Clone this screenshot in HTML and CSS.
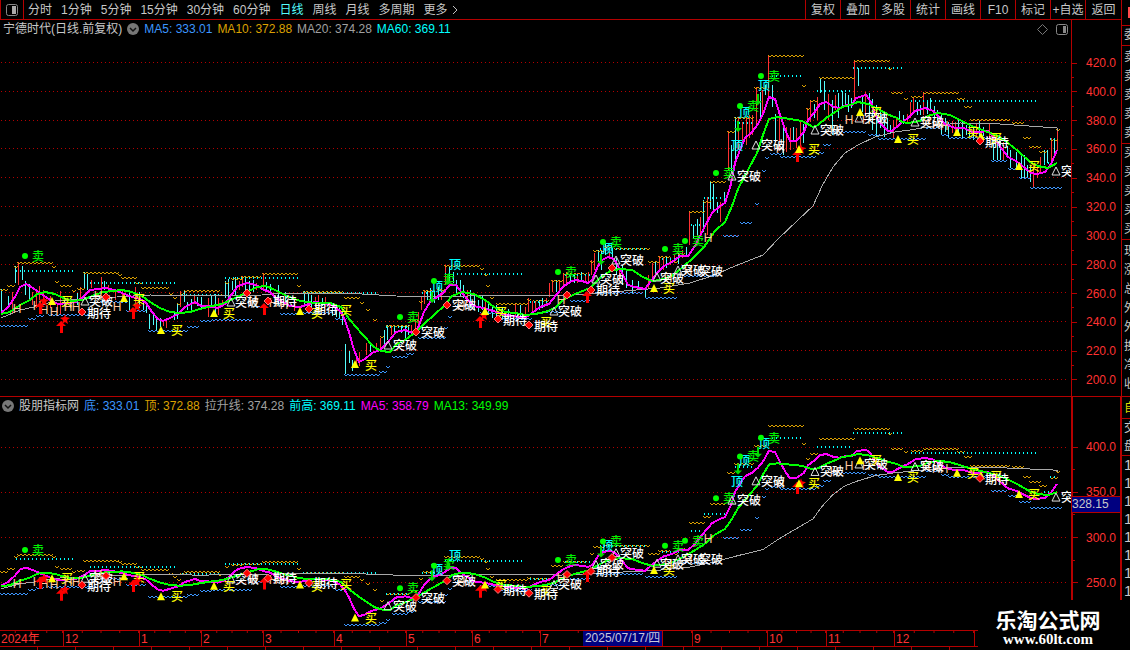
FILE: index.html
```html
<!DOCTYPE html>
<html lang="zh-CN">
  <head>
    <meta charset="UTF-8" />
    <meta name="viewport" content="width=device-width, initial-scale=1.0" />
    <title>宁德时代</title>
    <link rel="stylesheet" href="styles.css">
  </head>
  <body>
    <div class="app">
      <main class="main">
        <nav class="toolbar">
          <button class="layout-btn" aria-label="布局">
            <svg width="12" height="12" viewBox="0 0 12 12">
              <rect x="0.5" y="0.5" width="11" height="11" rx="2" fill="none" stroke="#888" />
              <rect x="6" y="2" width="4" height="8" fill="#aaa" />
            </svg>
          </button>
          <div class="periods">
            <button>分时</button>
            <button>1分钟</button>
            <button>5分钟</button>
            <button>15分钟</button>
            <button>30分钟</button>
            <button>60分钟</button>
            <button class="active">日线</button>
            <button>周线</button>
            <button>月线</button>
            <button>多周期</button>
            <button class="more">更多
              <svg width="6" height="10" viewBox="0 0 6 10">
                <path d="M1 1l4 4-4 4" fill="none" stroke="#c0c0c0" />
              </svg>
            </button>
          </div>
          <div class="tools">
            <button>复权</button>
            <button>叠加</button>
            <button>多股</button>
            <button>统计</button>
            <button>画线</button>
            <button>F10</button>
            <button>标记</button>
            <button>+自选</button>
            <button>返回</button>
          </div>
        </nav>

        <section class="panel">
          <div class="plot">
            <div class="legend">
              <span class="name">宁德时代(日线.前复权)</span>
              <button class="fold" aria-label="展开">
                <svg width="12" height="12" viewBox="0 0 12 12">
                  <circle cx="6" cy="6" r="6" fill="#777" />
                  <path d="M3 5l3 3 3-3" fill="none" stroke="#111" stroke-width="1.5" />
                </svg>
              </button>
              <span class="blue">MA5: 333.01</span>
              <span class="gold">MA10: 372.88</span>
              <span class="gray">MA20: 374.28</span>
              <span class="cyan">MA60: 369.11</span>
              <span class="corner">
                <svg width="11" height="11" viewBox="0 0 11 11">
                  <path d="M5.5 0.5l5 5-5 5-5-5z" fill="none" stroke="#777" />
                </svg>
                <svg width="12" height="11" viewBox="0 0 12 11">
                  <rect x="0.5" y="0.5" width="11" height="10" rx="2" fill="none" stroke="#888" />
                  <rect x="7" y="2" width="3" height="7" fill="#888" />
                </svg>
              </span>
            </div>
            <svg class="chart" id="priceChart" viewBox="0 38 1071 358"></svg>
          </div>
          <ul class="axis">
            <li>420.0</li><li class="minor"></li>
            <li>400.0</li><li class="minor"></li>
            <li>380.0</li><li class="minor"></li>
            <li>360.0</li><li class="minor"></li>
            <li>340.0</li><li class="minor"></li>
            <li>320.0</li><li class="minor"></li>
            <li>300.0</li><li class="minor"></li>
            <li>280.0</li><li class="minor"></li>
            <li>260.0</li><li class="minor"></li>
            <li>240.0</li><li class="minor"></li>
            <li>220.0</li><li class="minor"></li>
            <li>200.0</li>
          </ul>
        </section>

        <section class="panel panel-sub">
          <div class="plot">
            <div class="legend">
              <button class="fold" aria-label="展开">
                <svg width="12" height="12" viewBox="0 0 12 12">
                  <circle cx="6" cy="6" r="6" fill="#777" />
                  <path d="M3 5l3 3 3-3" fill="none" stroke="#111" stroke-width="1.5" />
                </svg>
              </button>
              <span class="name">股朋指标网</span>
              <span class="blue">底: 333.01</span>
              <span class="gold">顶: 372.88</span>
              <span class="gray">拉升线: 374.28</span>
              <span class="cyan">前高: 369.11</span>
              <span class="magenta">MA5: 358.79</span>
              <span class="green">MA13: 349.99</span>
            </div>
            <svg class="chart" id="signalChart" viewBox="0 414 1071 216"></svg>
          </div>
          <ul class="axis">
            <li>400.0</li><li class="minor"></li>
            <li>350.0</li><li class="minor"></li>
            <li>300.0</li><li class="minor"></li>
            <li>250.0</li>
          </ul>
          <span class="cursor-price">328.15</span>
        </section>

        <div class="dates">
          <span>2024年</span>
          <span>12</span>
          <span>1</span>
          <span>2</span>
          <span>3</span>
          <span>4</span>
          <span>5</span>
          <span>6</span>
          <span>7</span>
          <span>9</span>
          <span>10</span>
          <span>11</span>
          <span>12</span>
          <span></span>
          <b class="cursor-date">2025/07/17/四</b>
        </div>
        <div class="strip"></div>
      </main>

      <aside class="quote">
        <div class="tab"><i></i></div>
        <div>委</div>
        <div class="sells">卖<br>卖<br>卖<br>卖<br>卖</div>
        <div>买<br>买<br>买<br>买<br>买</div>
        <div class="stats">现<br>涨<br>总<br>外<br>外<br>换<br>净<br>收</div>
        <div class="self">自</div>
        <div class="deal">交<br>盘</div>
        <div class="ticks">1<br>1<br>1<br>1<br>1<br>1<br>1<br>1</div>
      </aside>

      <div class="watermark">
        <strong>乐淘公式网</strong>
        <span>www.60lt.com</span>
      </div>
    </div>
    <script src="chart.js"></script>
  </body>
</html>
```

FILE: styles.css
```css
* {
  box-sizing: border-box;
}
body {
  margin: 0;
  background: #000;
  color: #c8c8c8;
  font-family: "Liberation Sans", "Noto Sans CJK SC", sans-serif;
  font-size: 12px;
  line-height: 16px;
  overflow: hidden;
}
button {
  background: none;
  border: none;
  padding: 0;
  color: inherit;
  font: inherit;
  white-space: nowrap;
  cursor: pointer;
}
.app {
  display: flex;
  position: relative;
  height: 100vh;
  overflow: hidden;
}
.main {
  flex: 1;
  min-width: 0;
}

/* toolbar */
.toolbar {
  display: flex;
  height: 20px;
  border-bottom: 1px solid #b40000;
}
.layout-btn {
  display: flex;
  align-items: center;
  justify-content: center;
  width: 24px;
  border-left: 1px solid #b40000;
  border-right: 1px solid #b40000;
}
.periods {
  display: flex;
  gap: 9px;
  flex: 1;
  padding-left: 4px;
}
.periods .active {
  color: #54fcfc;
}
.more {
  display: flex;
  align-items: center;
  gap: 4px;
}
.tools {
  display: flex;
}
.tools button {
  width: 35px;
  border-left: 1px solid #b40000;
}
.tools button:last-child {
  width: 36px;
}

/* chart panels */
.panel {
  display: flex;
  position: relative;
}
.panel-sub {
  border-top: 1px solid #b40000;
}
.plot {
  flex: 1;
  min-width: 0;
}
.legend {
  display: flex;
  align-items: center;
  gap: 5px;
  height: 18px;
  padding: 0 3px;
  white-space: nowrap;
}
.panel-sub .legend {
  height: 17px;
  padding-left: 2px;
}
.fold {
  display: flex;
}
.corner {
  display: flex;
  gap: 8px;
  margin-left: auto;
}
.chart {
  display: block;
  width: 100%;
}
.blue { color: #3c96ff; }
.gold { color: #dca000; }
.gray { color: #a0a0a0; }
.cyan { color: #00ffff; }
.magenta { color: #ff00ff; }
.green { color: #00ff00; }

.sig {
  font-size: 12px;
  font-weight: 500;
  text-anchor: middle;
}
.sell { fill: #00f000; }
.top { fill: #00ffff; }
.buy { fill: #ffff00; }
.hold { fill: #ffc8a0; }
.wait { fill: #ffffff; }

.axis {
  display: flex;
  flex-direction: column;
  justify-content: space-between;
  width: 50px;
  margin: 0;
  padding: 35px 0 8px;
  list-style: none;
  border-left: 1px solid #b40000;
  color: #ff3232;
}
.panel-sub .axis {
  padding: 42px 0 39px;
  border-left-width: 2px;
  border-right: 1px solid #b40000;
}
.axis li {
  display: flex;
  align-items: center;
  gap: 9px;
  height: 16px;
}
.panel-sub li {
  gap: 8px;
}
.axis li::before {
  content: "";
  width: 5px;
  height: 1px;
  background: #b40000;
}
.axis .minor {
  height: 0;
}
.axis .minor::before {
  width: 2px;
}
.cursor-price {
  position: absolute;
  right: 0;
  top: 99px;
  width: 49px;
  border: 1px solid #b40000;
  border-left: none;
  background: #000080;
  line-height: 15px;
}

/* date axis */
.dates {
  display: grid;
  grid-template-columns: 63fr 76fr 62fr 62fr 71fr 72fr 66fr 68fr 152fr 75fr 59fr 68fr 80fr 147fr;
  position: relative;
  height: 17px;
  border-top: 1px solid #b40000;
  border-bottom: 1px solid #b40000;
  color: #ff3232;
}
.dates span {
  padding-left: 1px;
  border-left: 1px solid #b40000;
  background: linear-gradient(to right, transparent calc(100% - 1px), #b40000 0) 0 0 / 25% 2px repeat-x;
}
.dates span:first-child {
  border-left: none;
}
.cursor-date {
  position: absolute;
  left: 52%;
  top: 0;
  padding: 0 2px;
  background: #000080;
  border-right: 1px solid #b40000;
  color: #c8c8dc;
  font-weight: normal;
  line-height: 15px;
}
.strip {
  height: 4px;
  background: repeating-linear-gradient(to right, transparent 0 37px, #b40000 37px 38px);
}

/* quote column */
.quote {
  width: 9px;
  overflow: hidden;
  border-left: 1px solid #b40000;
  line-height: 19px;
}
.quote div {
  padding-left: 2px;
  border-bottom: 1px solid #b40000;
}
.quote .tab {
  height: 26px;
  padding: 7px 0 0 6px;
}
.tab i {
  display: block;
  height: 11px;
  background: #ff4b4b;
}
.quote .sells {
  padding-top: 2px;
}
.quote .stats {
  padding: 2px 0 2px 2px;
}
.quote .self {
  padding-top: 2px;
  color: #dcdc00;
}
.quote .deal,
.quote .ticks {
  line-height: 18px;
}
.quote .ticks {
  border-bottom: none;
  font-size: 15px;
}

.watermark {
  display: flex;
  flex-direction: column;
  align-items: center;
  position: absolute;
  right: 0;
  bottom: 0;
  width: 152px;
  height: 50px;
  padding: 8px 12px 0 0;
  background: #000;
  color: #fff;
}
.watermark strong {
  font-family: "Noto Sans CJK SC", sans-serif;
  font-size: 21px;
  line-height: 22px;
}
.watermark span {
  font-family: "Liberation Serif", serif;
  font-size: 15px;
  font-weight: bold;
  line-height: 18px;
}
```

FILE: chart.js
```js
const NS = "http://www.w3.org/2000/svg";

// moving averages, x,y pairs
const ma5 = "1,313 8,307 15,297 20,287 26,284 33,288 40,293 50,300 58,304 68,303 76,302 83,297 90,290 98,289 106,288 114,290 122,293 132,297 140,299 146,303 152,312 158,319 163,321 170,318 178,314 185,307 195,302 201,306 208,306 218,308 225,304 232,294 238,286 247,283 256,285 264,290 270,292 276,298 283,302 290,306 300,307 315,302 322,303 332,305 340,311 344,318 349,332 354,350 359,362 365,359 372,353 380,350 388,342 396,332 405,330 413,333 418,328 424,312 430,302 437,297 443,293 450,285 456,285 462,293 468,300 474,306 483,308 493,311 503,314 513,316 525,318 532,313 540,307 549,304 556,295 564,286 570,282 575,280 582,281 588,283 592,280 598,266 602,260 608,257 614,259 622,273 628,285 635,287 645,289 651,281 657,273 664,266 672,262 680,256 688,256 695,246 699,238 705,226 712,213 720,206 725,203 731,184 735,163 740,150 745,138 752,132 758,124 763,114 769,97 775,99 780,115 786,132 790,141 796,141 804,132 808,120 814,113 820,104 826,102 834,107 840,108 846,105 852,105 856,98 866,95 871,102 875,114 879,122 888,131 892,131 900,124 908,118 915,111 925,108 933,111 938,116 945,124 955,128 964,128 972,132 980,132 988,131 995,139 1002,149 1008,157 1016,161 1025,168 1031,173 1037,174 1045,172 1051,164 1057,150";
const ma13 = "1,314 10,312 20,305 30,300 37,294 45,292 55,294 63,298 72,301 83,300 92,296 103,292 113,291 122,290 132,292 142,296 150,302 160,308 170,312 180,313 190,312 200,309 212,306 222,304 235,298 247,292 257,287 266,286 275,290 287,296 300,301 315,303 330,303 341,307 350,320 362,334 374,347 381,351 390,352 397,344 405,340 416,332 424,324 434,315 444,306 452,296 462,292 474,294 485,300 494,307 505,312 515,313 525,315 535,314 545,312 555,308 563,300 575,294 590,288 600,278 610,271 620,269 632,270 643,277 652,281 660,280 672,276 683,267 693,258 704,247 715,231 725,222 732,206 738,189 748,170 757,153 763,135 769,119 777,117 790,119 802,121 813,127 818,125 826,118 834,113 842,107 850,105 858,102 868,104 878,109 889,115 897,118 902,122 908,123 920,121 928,116 938,113 950,115 960,120 972,126 985,131 998,136 1008,143 1018,151 1030,162 1038,166 1048,168 1057,163";
const lift = "1,318 20,310 34,307 55,301 100,298 150,295 200,296 262,295 280,293 345,293 396,296 456,297 480,295 530,295 560,296 600,293 660,288 690,283 712,276 735,266 763,255 778,239 798,220 813,206 822,186 833,167 845,153 858,145 875,137 895,132 910,130 940,125 960,123 1000,124 1057,128 1058,131";

// x, high, low, u = up / d = down
const candles = `1 289 313 d;8 296 307 d;12 292 314 u;15 266 283 d;18 262 285 u;22 266 280 d;25 281 295 d;29 284 299 d;32 292 305 u;36 290 308 u;39 286 300 u;43 290 302 u;50 296 308 u;57 303 313 u;60 291 314 u;64 300 306 d;70 298 308 d;77 293 305 d;80 287 300 u;84 272 289 d;87 274 290 d;91 280 288 u;101 277 292 u;104 281 290 d;108 285 292 u;115 292 300 u;122 290 300 u;129 291 310 d;135 287 303 u;139 292 308 d;143 300 310 d;146 303 313 d;149 314 329 d;153 315 325 d;156 317 330 d;160 318 327 d;163 322 326 u;166 318 328 u;174 311 320 d;177 304 319 d;180 291 307 u;184 290 302 d;187 302 310 d;191 299 311 d;194 294 304 u;197 297 306 d;201 297 309 d;208 298 317 u;211 296 308 d;215 294 315 d;218 298 315 u;222 300 306 u;225 281 298 d;228 279 297 d;232 281 290 d;235 277 295 d;239 281 290 u;242 276 287 u;245 278 290 d;249 281 291 d;253 280 292 d;256 283 290 u;263 273 290 u;266 282 290 d;270 284 292 d;278 285 305 d;285 292 303 d;294 300 311 u;304 291 304 d;308 293 307 d;311 295 310 d;315 297 307 u;318 295 305 u;322 298 306 d;325 297 307 u;329 302 309 u;332 303 316 d;336 306 317 d;339 308 318 d;342 312 325 d;345 344 374 d;349 351 363 d;352 360 371 d;356 353 368 u;359 352 366 u;366 343 355 u;370 345 352 d;376 343 352 u;380 338 350 u;384 330 345 d;387 325 340 d;391 325 335 u;394 325 334 d;401 325 333 d;405 326 338 d;408 325 335 d;411 325 335 u;415 320 333 u;418 312 325 u;421 297 310 u;424 290 304 u;427 290 300 d;430 288 302 d;434 290 303 d;438 287 300 d;441 288 300 u;445 265 285 u;449 267 282 d;453 272 283 d;456 280 293 d;460 280 297 d;463 285 298 d;467 290 303 u;470 290 308 d;474 296 310 d;478 300 312 d;482 296 310 d;485 300 312 u;488 303 315 d;492 306 318 d;496 305 317 d;502 307 320 d;508 309 318 d;515 304 316 u;520 305 318 d;525 307 319 u;528 298 312 u;532 301 313 u;535 301 311 u;539 300 310 d;542 298 308 d;546 298 305 u;549 283 297 u;552 280 292 u;556 280 292 d;559 280 290 u;563 273 285 u;566 272 283 u;570 274 282 d;574 274 283 d;577 273 283 u;581 272 282 d;585 275 283 u;588 272 283 u;591 260 275 u;594 253 270 u;598 250 262 d;601 250 270 d;605 243 255 d;609 248 258 u;612 249 260 d;616 258 275 d;619 268 281 u;622 265 285 d;626 270 288 d;632 280 293 d;638 281 290 d;645 288 297 d;648 275 288 u;652 263 278 u;655 262 275 d;659 256 272 u;663 258 270 u;666 257 268 d;670 257 265 u;674 255 263 u;678 253 264 d;682 250 258 u;686 247 256 d;689 211 245 u;693 225 238 d;697 219 235 d;700 217 235 u;703 200 232 d;707 197 235 u;710 181 209 d;713 184 210 d;717 202 213 d;720 202 222 u;724 192 204 d;728 131 171 u;731 145 172 d;735 117 165 d;738 117 150 u;742 122 144 u;746 118 145 u;749 115 138 u;752 115 135 u;756 87 125 u;760 92 120 d;762 90 115 u;765 85 95 d;768 55 100 u;772 85 107 d;775 114 142 d;779 115 150 u;783 126 155 d;786 127 152 u;790 128 150 u;793 127 142 d;796 128 148 u;800 122 150 u;803 124 143 d;807 108 125 u;810 101 122 u;814 104 118 d;817 97 120 u;820 78 93 d;824 81 110 d;828 94 120 u;832 100 135 d;835 95 110 u;838 93 118 d;842 91 108 d;845 93 105 d;848 95 112 d;851 98 108 d;854 60 100 u;858 68 86 d;862 96 112 d;865 92 115 u;869 93 120 d;872 99 130 d;876 105 137 d;880 110 128 d;884 115 137 d;887 118 132 d;890 125 133 d;893 120 138 u;896 117 128 u;899 111 122 d;903 115 124 d;907 114 122 u;910 102 118 u;913 97 112 u;917 102 115 d;920 105 115 d;923 92 115 u;927 100 114 d;930 98 110 d;934 106 118 d;937 110 120 d;941 115 134 d;945 118 132 d;948 122 137 d;952 121 133 u;955 122 133 u;958 120 133 d;962 120 138 d;966 125 135 d;969 125 137 d;973 128 140 d;976 123 137 u;979 120 136 d;983 127 136 d;989 124 138 u;993 135 160 d;997 138 160 d;1000 141 160 d;1003 142 160 u;1007 146 157 d;1010 150 168 d;1016 152 168 d;1021 155 178 d;1024 155 178 d;1027 165 178 d;1030 165 182 d;1033 165 187 u;1037 165 178 u;1040 157 173 u;1044 150 165 d;1047 150 163 d;1051 138 160 u;1054 139 155 d;1057 129 150 u`;

// level lines: x from, x to, y
const tops = "0 6 289;7 14 285;14 17 266;17 50 262;52 54 266;55 57 281;60 71 285;72 75 290;77 82 288;83 117 272;118 120 274;121 134 277;135 140 282;141 167 287;169 172 293;173 175 297;177 179 303;180 182 293;184 217 290;218 222 294;225 228 282;231 240 278;241 261 276;262 296 273;297 299 285;303 340 291;344 358 297;360 364 302;366 370 309;373 375 319;380 384 336;386 408 325;410 416 320;419 422 301;423 435 290;437 443 289;444 478 265;480 481 268;484 485 274;486 488 285;490 493 297;496 525 303;527 531 299;533 548 300;551 560 280;563 587 273;590 592 261;593 603 250;604 612 246;614 647 248;648 657 261;658 668 256;670 676 261;677 683 253;689 702 211;703 709 201;710 726 181;727 733 131;734 753 117;754 766 87;768 801 55;802 805 85;806 808 108;810 816 100;819 853 77;854 887 60;888 892 68;891 901 92;904 906 98;911 922 96;923 956 92;957 963 98;964 969 106;970 1010 119;1012 1022 122;1023 1028 137;1029 1038 146;1039 1047 151;1050 1055 139;1056 1058 129";
const bottoms = "0 26 325;28 35 318;36 44 315;48 95 314;100 125 301;126 145 310;148 186 330;187 196 326;200 209 320;212 250 319;255 265 306;280 300 313;303 330 312;335 344 318;344 378 374;379 385 371;386 390 366;392 405 356;406 413 353;418 443 337;444 446 327;448 450 316;455 478 305;480 495 312;500 530 318;545 560 311;570 590 300;595 640 292;645 677 297;683 713 275;723 739 235;740 752 222;755 757 203;762 764 170;765 767 157;770 779 153;780 815 156;816 822 152;823 829 144;830 866 131;868 877 134;878 924 138;925 940 127;941 948 134;948 985 137;991 1006 160;1008 1018 168;1019 1029 177;1030 1059 187";
const highs = "16 73 271;90 177 283;182 220 295;225 301 278;303 376 293;386 410 327;422 440 293;445 524 274;530 548 302;565 590 275;600 647 249;662 680 259;691 700 225;704 726 198;735 752 123;772 803 76;817 851 91;853 903 68;911 1037 101;1044 1050 163;1050 1056 139";

// signals at x,y (centre of the glyph or mark)
const texts = {
  卖: ["sell", "37,256 412,317 448,279 570,272 615,242 677,249 697,241 728,173 752,106 773,76"],
  顶: ["top", "454,264 436,286 606,248 736,145 743,112 763,85"],
  买: ["buy", "66,301 138,299 176,330 228,313 316,313 345,310 370,365 500,312 545,322 668,288 813,149 875,112 912,139 972,132 995,138 1033,166"],
  H: ["hold", "16,308 36,305 43,309 53,311 67,306 75,306 97,295 116,306 252,300 272,302 283,304 460,305 560,299 667,277 687,269 707,237 779,148 833,129 848,119 865,119 925,120 935,124 943,125"],
  期待: ["wait", "98,313 284,301 325,309 514,320 545,326 607,290 996,142"],
  突破: ["wait", "100,301 246,302 404,345 432,332 463,305 569,311 611,279 631,260 671,278 692,270 710,271 748,176 772,145 831,130 875,118 931,122 1072,171"],
};
const marks = [
  ["0,-4 4,4 -4,4", "none", "#e0e0e0", "85,301 231,302 388,345 554,311 596,279 616,260 657,277 678,270 732,176 756,145 815,130 859,118 915,122 1056,171"],
  ["0,-5 5,0 2,0 2,7 -1,7 -1,0 -5,0", "#ff0000", "none", "40,307 61,326 133,312 264,308 480,321 587,296 797,155"],
  ["0,-5 1,-2 5,-1 2,1 3,5 0,3 -3,5 -2,1 -5,-1 -1,-2", "#ff0000", "none", "44,301 65,319 137,306 484,315 801,149"],
  ["0,5 4,1 1,1 1,-6 -1,-6 -1,1 -4,1", "#00dc00", "none", "432,298 448,280 601,260 738,127 758,100"],
  ["0,-4 4,4 -4,4", "#ffff00", "none", "52,301 124,298 161,330 214,313 300,311 355,364 485,311 654,288 799,149 860,112 898,139 957,132 981,136 1019,166"],
  ["0,-4 4,0 0,4 -4,0", "#ff0000", "#ff7878", "82,312 106,297 247,293 268,301 309,309 416,332 447,305 498,319 529,325 567,295 591,290 612,268 980,141"],
];
const dots = "25,256 400,317 434,281 558,272 603,242 665,249 685,241 716,173 740,106 761,76";

function add(svg, tag, attrs, text) {
  const el = document.createElementNS(NS, tag);
  for (const key in attrs) el.setAttribute(key, attrs[key]);
  if (text) el.textContent = text;
  svg.appendChild(el);
}

function points(str) {
  return str.split(" ").map((p) => p.split(",").map(Number));
}

function rows(str) {
  return str.split(";").map((r) => r.split(" "));
}

function drawLine(svg, str, y, color, width) {
  const pts = points(str).map((p) => p[0] + "," + y(p[1])).join(" ");
  add(svg, "polyline", {
    points: pts, fill: "none", stroke: color,
    "stroke-width": width, "shape-rendering": "crispEdges",
  });
}

function drawWaves(svg, str, y, color) {
  rows(str).forEach(([from, to, level]) => {
    let d = "M" + from + " " + (Math.round(y(+level)) + 0.5);
    for (let x = +from; x < +to; x += 4) d += "l2 1l2 -1";
    add(svg, "path", { d, fill: "none", stroke: color, "shape-rendering": "crispEdges" });
  });
}

function drawChart(id, y, grid, withCandles) {
  const svg = document.getElementById(id);

  grid.forEach((g) => {
    const gy = Math.round(g) + 0.5;
    add(svg, "line", {
      x1: 1, x2: 1068, y1: gy, y2: gy, stroke: "#b40000",
      "stroke-dasharray": "1 3", "shape-rendering": "crispEdges",
    });
  });

  if (withCandles) {
    rows(candles).forEach(([x, high, low, dir]) => {
      add(svg, "line", {
        x1: +x + 0.5, x2: +x + 0.5, y1: high, y2: low,
        stroke: dir === "u" ? "#ff3232" : "#54fcfc",
      });
    });
  }

  drawWaves(svg, tops, y, "#dca000");
  drawWaves(svg, bottoms, y, "#3c96ff");
  rows(highs).forEach(([from, to, level]) => {
    const hy = Math.round(y(+level));
    add(svg, "line", {
      x1: from, x2: to, y1: hy, y2: hy, stroke: "#00ffff",
      "stroke-width": 2, "stroke-dasharray": "1 3", "shape-rendering": "crispEdges",
    });
  });

  drawLine(svg, lift, y, "#a8a8a8", 1);
  drawLine(svg, ma5, y, "#ff00ff", 2);
  drawLine(svg, ma13, y, "#00ff00", 2);

  for (const word in texts) {
    points(texts[word][1]).forEach((p) => {
      add(svg, "text", { x: p[0] + 1, y: Math.round(y(p[1])) + 5, class: "sig " + texts[word][0] }, word);
    });
  }
  marks.forEach(([shape, fill, stroke, at]) => {
    points(at).forEach((p) => {
      add(svg, "polygon", {
        points: shape, fill, stroke,
        transform: "translate(" + p[0] + " " + y(p[1]) + ")",
      });
    });
  });
  points(dots).forEach((p) => {
    add(svg, "circle", { cx: p[0], cy: y(p[1]), r: 3, fill: "#00ff00" });
  });
}

const priceGrid = [];
for (let i = 0; i < 12; i++) priceGrid.push(62 + i * 28.8);

drawChart("priceChart", (y) => y, priceGrid, true);
drawChart("signalChart", (y) => 429.3 + (y - 62.5) * 0.6244, [447, 492, 537, 582], false);
```
